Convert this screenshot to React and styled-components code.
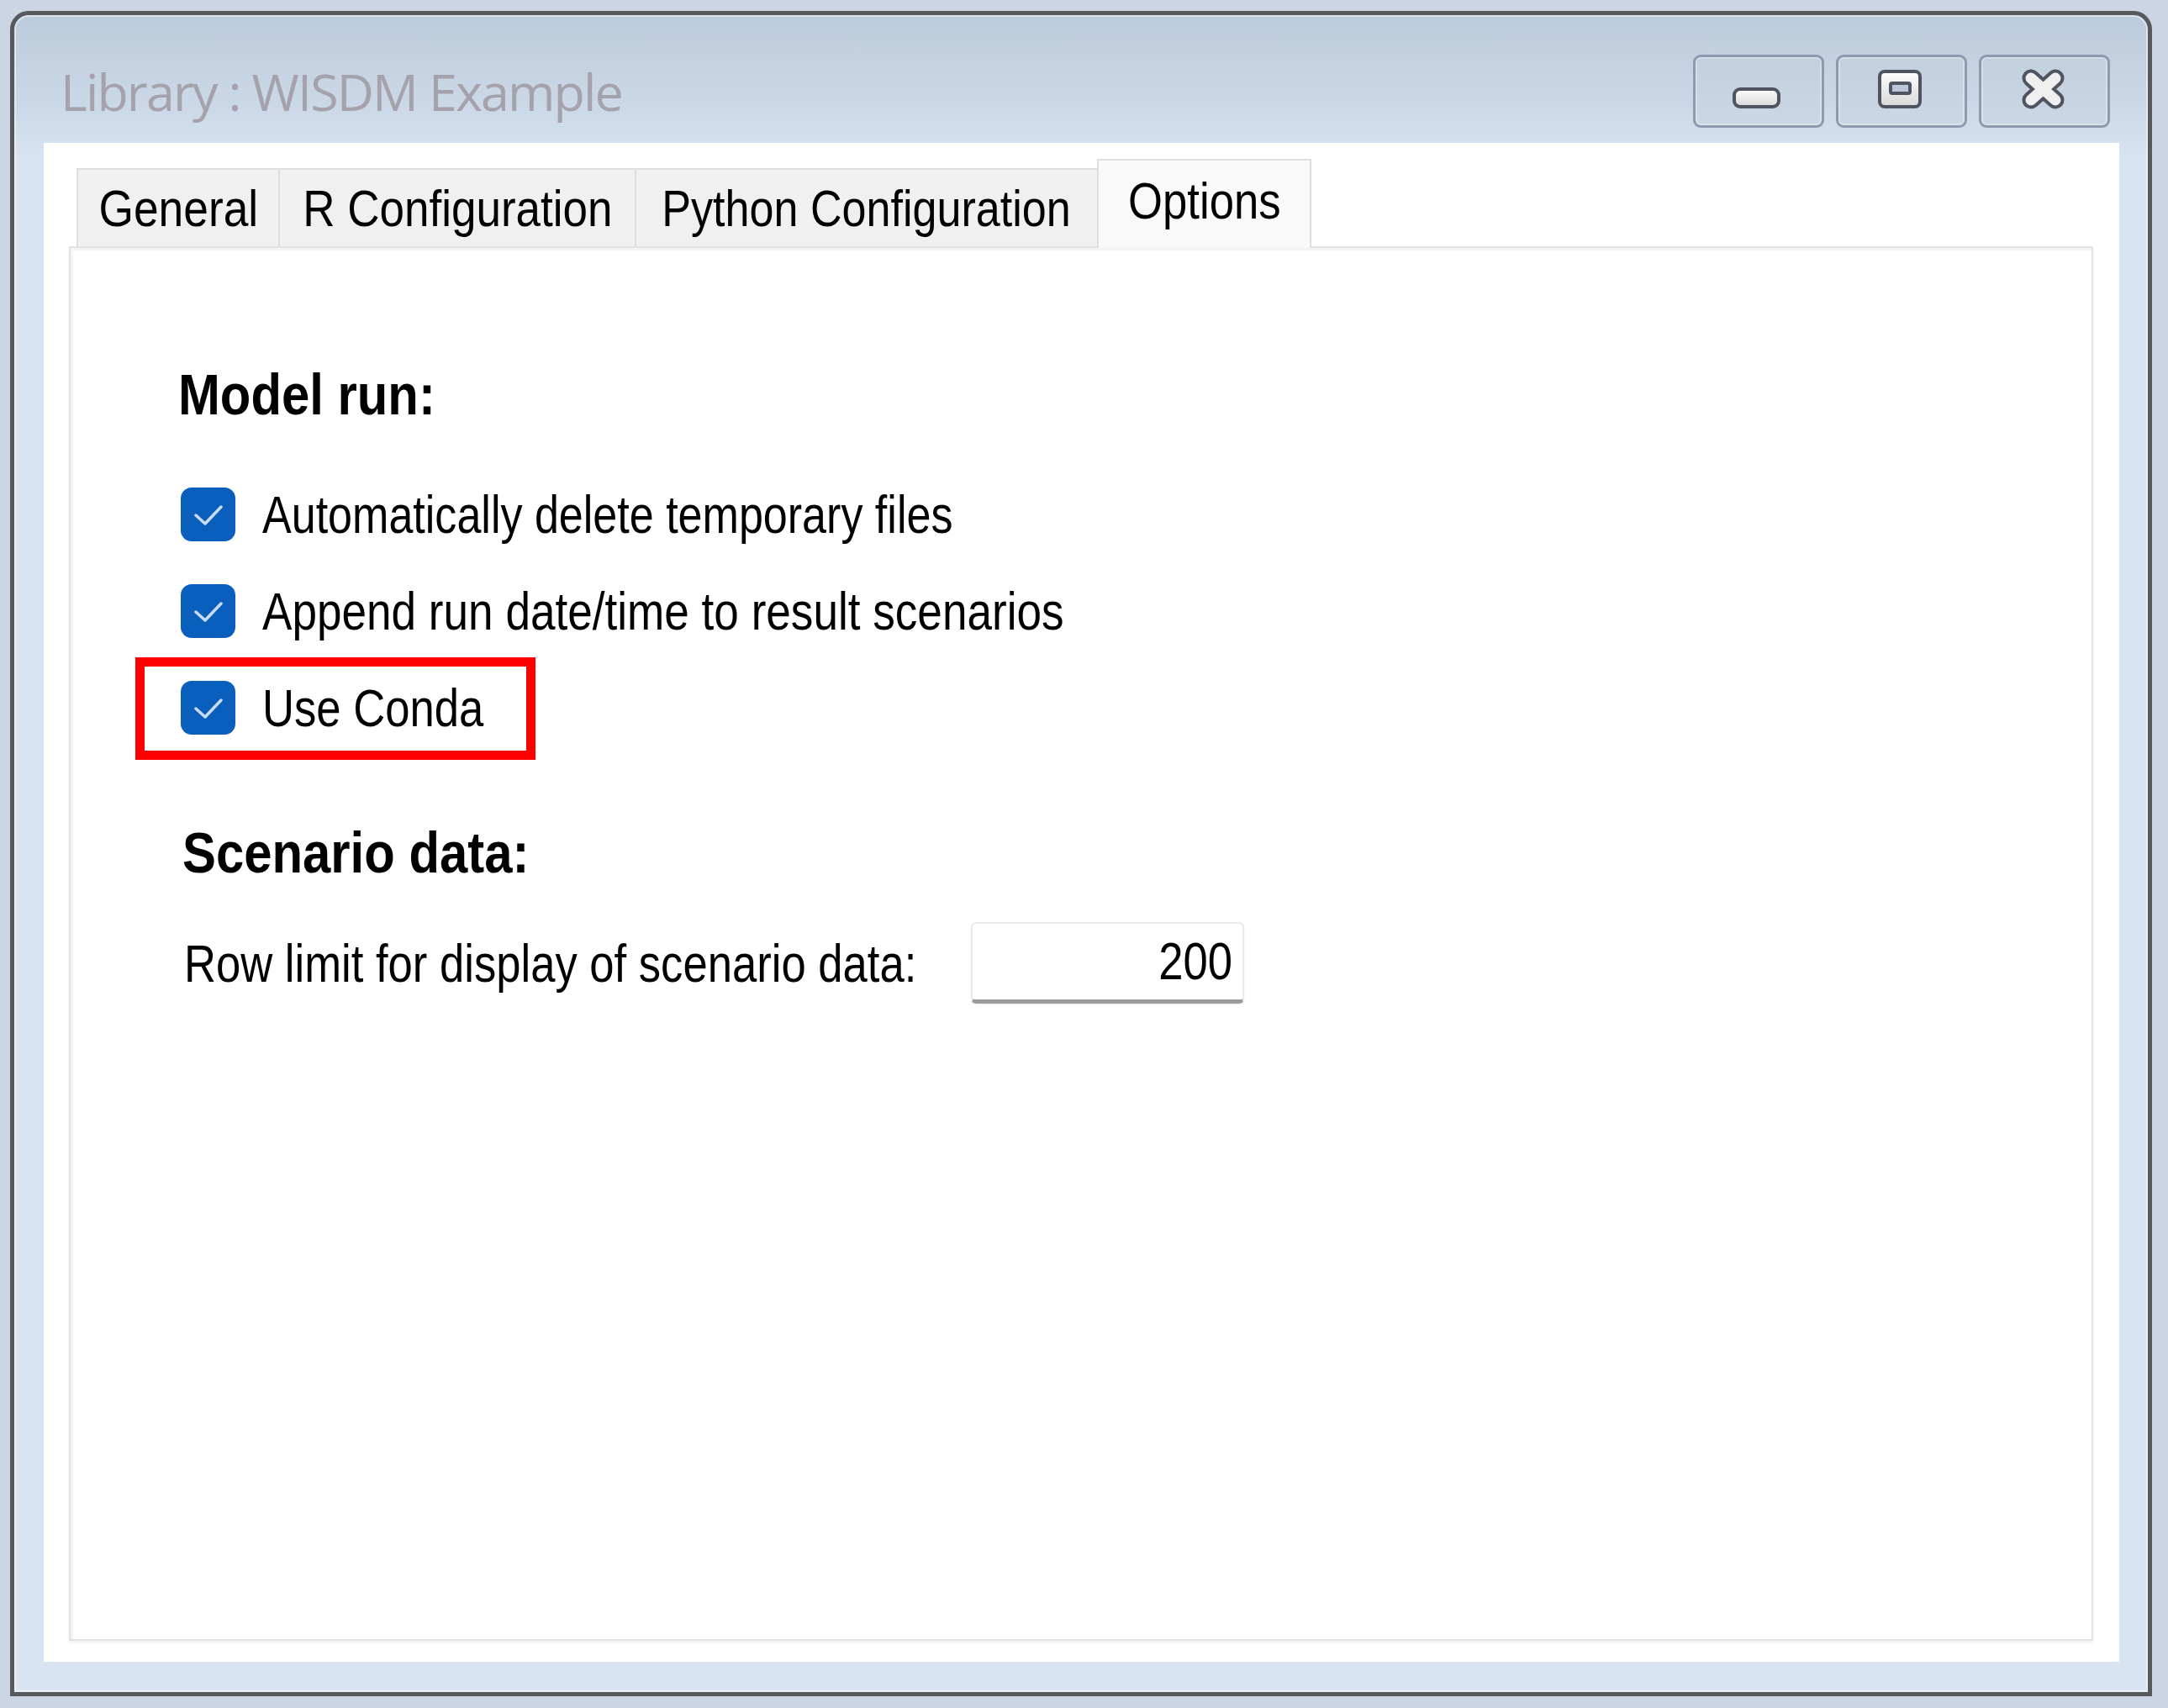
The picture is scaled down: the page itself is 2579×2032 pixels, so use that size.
import styled, { createGlobalStyle } from "styled-components";

const GlobalStyle = createGlobalStyle`
  html, body {
    margin: 0;
    padding: 0;
  }
  body {
    width: 2579px;
    height: 2032px;
    overflow: hidden;
    background: #cbd5e3;
    font-family: "Liberation Sans", Arial, sans-serif;
    color: #000;
  }
`;

const Screen = styled.div`
  box-sizing: border-box;
  width: 2579px;
  height: 2032px;
  padding: 13px 19px 14px 12px;
  display: flex;
`;

const Window = styled.div`
  flex: 1;
  display: flex;
  flex-direction: column;
  border: 5px solid #58595d;
  border-radius: 22px 22px 0 0;
  background: linear-gradient(180deg, #bccbdb 0px, #cbd8e7 110px, #d8e4f1 170px, #d8e4f1 100%);
  box-shadow: inset 0 0 0 2px rgba(255, 255, 255, 0.45);
`;

const TitleBar = styled.div`
  height: 152px;
  flex-shrink: 0;
  display: flex;
  justify-content: space-between;
  align-items: flex-start;
  padding: 0 45px 0 55px;
`;

const Title = styled.span`
  margin-top: 51px;
  font-family: "Segoe UI", "Open Sans", "Noto Sans", sans-serif;
  font-size: 61px;
  line-height: 80px;
  letter-spacing: -1.9px;
  color: #a5a2ab;
`;

const Controls = styled.div`
  margin-top: 47px;
  display: flex;
  gap: 14px;
`;

const CtrlButton = styled.div`
  box-sizing: border-box;
  width: 156px;
  height: 87px;
  border: 3px solid #8d9bb0;
  border-radius: 9px;
  background: linear-gradient(180deg, #c2cfdd, #cbd7e5);
  box-shadow: inset 0 0 0 2px rgba(255, 255, 255, 0.3);
  svg {
    display: block;
  }
`;

const Client = styled.div`
  flex: 1;
  display: flex;
  flex-direction: column;
  margin: 0 34px 36px 35px;
  padding: 19px 31px 25px 30px;
  background: #fff;
`;

const TabStrip = styled.div`
  display: flex;
  align-items: flex-end;
  height: 104px;
  padding-left: 11px;
  position: relative;
  z-index: 1;
`;

const Tab = styled.div`
  box-sizing: border-box;
  width: ${(p) => p.$w}px;
  height: ${(p) => (p.$active ? 106 : 93)}px;
  margin-bottom: ${(p) => (p.$active ? -2 : 0)}px;
  margin-left: -2px;
  display: flex;
  align-items: center;
  justify-content: center;
  padding-bottom: ${(p) => (p.$active ? 10 : 0)}px;
  background: ${(p) => (p.$active ? "#f9f9f9" : "#f0f0f0")};
  border: 2px solid #dedede;
  border-bottom: none;
  font-size: 62px;
  white-space: nowrap;
`;

// the dialog font is a narrow, tall sans; Liberation Sans is squeezed to its width
const Squeeze = styled.span`
  display: inline-block;
  flex-shrink: 0;
  width: ${(p) => (p.$w ? `${p.$w}px` : "auto")};
  white-space: nowrap;
  transform: scaleX(${(p) => p.$sx || 0.835});
  transform-origin: ${(p) => p.$origin || "left"} center;
`;

const Panel = styled.div`
  flex: 1;
  display: flex;
  flex-direction: column;
  border: 2px solid #e2e2e2;
  box-shadow: inset 3px 3px 0 #f4f4f4, 0 3px 3px rgba(0, 0, 0, 0.05);
  padding: 139px 0 0 131px;
  background: #fff;
`;

const Heading = styled.div`
  height: 70px;
  line-height: 70px;
  margin-top: ${(p) => p.$top || 0}px;
  margin-left: ${(p) => p.$left || -3}px;
  font-size: 68px;
  font-weight: bold;
`;

const OptionList = styled.div`
  margin-top: 73px;
  display: flex;
  flex-direction: column;
  gap: 45px;
`;

const CheckRow = styled.div`
  position: relative;
  height: 70px;
  display: flex;
  align-items: center;
  gap: 32px;
  font-size: 63px;
`;

const Box = styled.div`
  width: 65px;
  height: 64px;
  flex-shrink: 0;
  border-radius: 13px;
  background: #0a5fbd;
  svg {
    display: block;
  }
`;

const Highlight = styled.div`
  position: absolute;
  left: -54px;
  top: -25px;
  width: 476px;
  height: 122px;
  box-sizing: border-box;
  border: 11px solid #ff0000;
`;

const FieldRow = styled.div`
  margin-top: 48px;
  margin-left: 4px;
  height: 97px;
  display: flex;
  align-items: center;
  gap: 66px;
  font-size: 63px;
`;

const NumberBox = styled.div`
  box-sizing: border-box;
  width: 325px;
  height: 97px;
  display: flex;
  align-items: center;
  justify-content: flex-end;
  padding: 0 12px 2px 0;
  border: 2px solid #ebebeb;
  border-bottom: 5px solid #9c9c9c;
  border-radius: 6px;
  font-size: 63px;
  box-shadow: 0 1px 2px rgba(0, 0, 0, 0.08);
`;

function Check() {
  return (
    <svg width="65" height="64" viewBox="0 0 65 64">
      <polyline
        points="18,33 29,43 48,23"
        fill="none"
        stroke="#c9dcf3"
        strokeWidth="3.5"
        strokeLinecap="round"
        strokeLinejoin="round"
      />
    </svg>
  );
}

function Option({ label, sx, children }) {
  return (
    <CheckRow>
      <Box>
        <Check />
      </Box>
      <Squeeze $sx={sx}>{label}</Squeeze>
      {children}
    </CheckRow>
  );
}

const glyphFill = (
  <defs>
    <linearGradient id="glyph" x1="0" y1="0" x2="0" y2="1">
      <stop offset="0" stopColor="#ffffff" />
      <stop offset="1" stopColor="#d8d8d8" />
    </linearGradient>
  </defs>
);

function MinIcon() {
  return (
    <svg width="150" height="81" viewBox="0 0 150 81">
      {glyphFill}
      <rect x="46" y="38" width="53" height="21" rx="7" fill="url(#glyph)" stroke="#4f5560" strokeWidth="4" />
    </svg>
  );
}

function MaxIcon() {
  return (
    <svg width="150" height="81" viewBox="0 0 150 81">
      {glyphFill}
      <rect x="49" y="17" width="48" height="42" rx="6" fill="url(#glyph)" stroke="#4f5560" strokeWidth="4" />
      <rect x="62" y="31" width="23" height="12" rx="2" fill="#b9c7d9" stroke="#4f5560" strokeWidth="4" />
    </svg>
  );
}

function CloseIcon() {
  return (
    <svg width="150" height="81" viewBox="0 0 150 81">
      <g strokeLinecap="round">
        <path d="M59 25 L88 51 M88 25 L59 51" stroke="#4f5560" strokeWidth="21" />
        <path d="M59 25 L88 51 M88 25 L59 51" stroke="#efefef" strokeWidth="13" />
      </g>
    </svg>
  );
}

const tabs = [
  { label: "General", w: 242, sx: 0.86 },
  { label: "R Configuration", w: 426, sx: 0.855 },
  { label: "Python Configuration", w: 552, sx: 0.84 },
  { label: "Options", w: 255, sx: 0.85, active: true },
];

export default function App() {
  return (
    <>
      <GlobalStyle />
      <Screen>
        <Window>
          <TitleBar>
            <Title>Library : WISDM Example</Title>
            <Controls>
              <CtrlButton><MinIcon /></CtrlButton>
              <CtrlButton><MaxIcon /></CtrlButton>
              <CtrlButton><CloseIcon /></CtrlButton>
            </Controls>
          </TitleBar>

          <Client>
            <TabStrip>
              {tabs.map((t) => (
                <Tab key={t.label} $w={t.w} $active={t.active}>
                  <Squeeze $sx={t.sx} $origin="center">{t.label}</Squeeze>
                </Tab>
              ))}
            </TabStrip>

            <Panel>
              <Heading>
                <Squeeze $sx={0.88}>Model run:</Squeeze>
              </Heading>
              <OptionList>
                <Option label="Automatically delete temporary files" sx={0.826} />
                <Option label="Append run date/time to result scenarios" sx={0.843} />
                <Option label="Use Conda" sx={0.835}>
                  <Highlight />
                </Option>
              </OptionList>

              <Heading $top={102} $left={2}>
                <Squeeze $sx={0.88}>Scenario data:</Squeeze>
              </Heading>
              <FieldRow>
                <Squeeze $w={870}>Row limit for display of scenario data:</Squeeze>
                <NumberBox>
                  <Squeeze $origin="right">200</Squeeze>
                </NumberBox>
              </FieldRow>
            </Panel>
          </Client>
        </Window>
      </Screen>
    </>
  );
}
